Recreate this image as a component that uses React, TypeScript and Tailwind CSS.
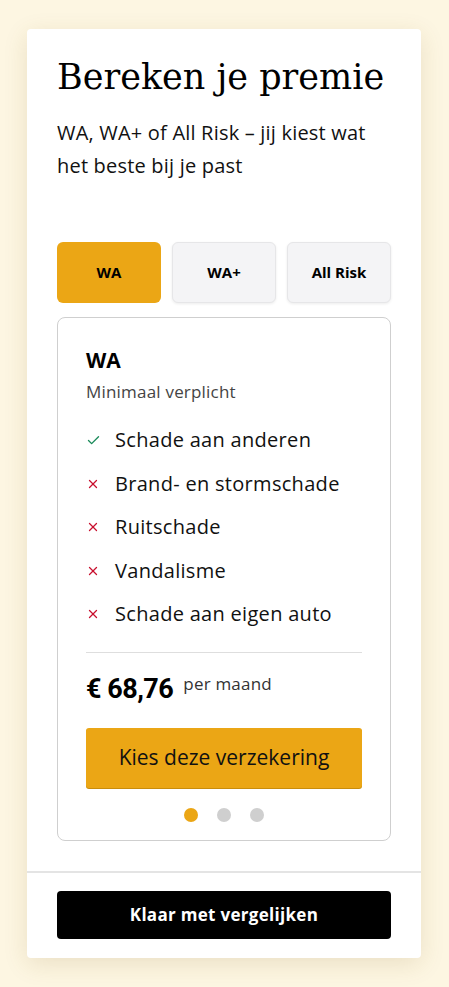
import { Check, X } from 'lucide-react';

const features = [
  { label: 'Schade aan anderen', included: true },
  { label: 'Brand- en stormschade', included: false },
  { label: 'Ruitschade', included: false },
  { label: 'Vandalisme', included: false },
  { label: 'Schade aan eigen auto', included: false },
];

const tabs = ['WA', 'WA+', 'All Risk'];

export default function App() {
  return (
    <div className="min-h-screen bg-[#fdf6e2] pt-[29px] pb-[29px]" style={{ fontFamily: '"Open Sans", "Noto Sans", sans-serif' }}>
      <div className="mx-[27px] w-[394px] bg-white rounded-[4px] shadow-[0_6px_24px_rgba(120,90,20,0.14)]">
        {/* Header */}
        <div className="px-[30px] pt-[25px]">
          <h1 className="text-[35px] leading-[46px] text-black" style={{ fontFamily: '"DejaVu Serif", serif' }}>
            Bereken je premie
          </h1>
          <p className="mt-[16px] text-[20px] leading-[33px] tracking-[0.2px] text-[#111]">
            WA, WA+ of All Risk – jij kiest wat het beste bij je past
          </p>
        </div>

        {/* Tabs */}
        <div className="px-[30px] pt-[60px] grid grid-cols-3 gap-[11px]">
          {tabs.map((t, i) => (
            <button
              key={t}
              className={
                i === 0
                  ? 'h-[61px] rounded-[6px] bg-[#eba615] text-[15px] font-bold text-black'
                  : 'h-[61px] rounded-[6px] bg-[#f4f4f6] border border-[#e6e6e8] shadow-[0_1px_3px_rgba(0,0,0,0.08)] text-[15px] font-bold text-black'
              }
            >
              {t}
            </button>
          ))}
        </div>

        {/* Plan card */}
        <div className="mx-[30px] mt-[14px] border border-[#cfcfcf] rounded-[8px] px-[28px] pt-[28px] pb-[18px]">
          <div className="text-[21px] leading-[28px] font-bold text-black">WA</div>
          <div className="mt-[6px] text-[17px] leading-[24px] tracking-[0.2px] text-[#444]">Minimaal verplicht</div>

          <ul className="mt-[22px] flex flex-col gap-[15.5px]">
            {features.map((f) => (
              <li key={f.label} className="flex items-center h-[28px]">
                <span className="w-[29px] shrink-0 flex items-center">
                  {f.included ? (
                    <Check size={15} strokeWidth={2.2} className="text-[#1a8a5a]" />
                  ) : (
                    <X size={14} strokeWidth={2.2} className="text-[#c8102e]" />
                  )}
                </span>
                <span className="text-[20px] leading-[28px] tracking-[0.3px] text-[#111]">{f.label}</span>
              </li>
            ))}
          </ul>

          <div className="mt-[24px] border-t border-[#dedede]" />

          <div className="mt-[20px] flex items-start gap-[10px]">
            <span className="text-[27px] leading-[32px] font-bold tracking-[-0.5px] text-black" style={{ fontFamily: 'Roboto, sans-serif' }}>
              € 68,76
            </span>
            <span className="text-[17px] leading-[22px] tracking-[0.2px] text-[#333]">per maand</span>
          </div>

          <button className="mt-[23px] w-full h-[60px] rounded-[3px] bg-[#eba615] shadow-[0_1px_0_#c98d0c] text-[21px] text-[#111]">
            Kies deze verzekering
          </button>

          <div className="mt-[20px] flex justify-center gap-[19px]">
            <span className="w-[14px] h-[14px] rounded-full bg-[#eba615]" />
            <span className="w-[14px] h-[14px] rounded-full bg-[#cfcfcf]" />
            <span className="w-[14px] h-[14px] rounded-full bg-[#cfcfcf]" />
          </div>
        </div>

        {/* Footer */}
        <div className="mt-[30px] border-t-2 border-[#e4e4e4] px-[30px] pt-[18px] pb-[19px]">
          <button className="w-full h-[48px] rounded-[4px] bg-black text-white text-[17px] font-bold tracking-[0.3px]">
            Klaar met vergelijken
          </button>
        </div>
      </div>
    </div>
  );
}
